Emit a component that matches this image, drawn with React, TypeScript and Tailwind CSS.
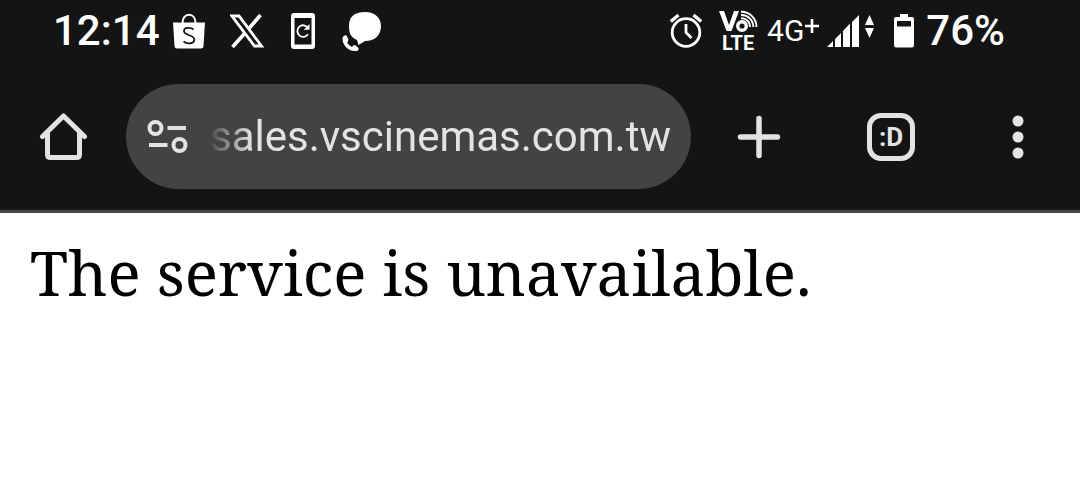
import React, { useState } from 'react';

const StatusBar: React.FC = () => {
    return (
        <div className="flex h-[62px] items-center justify-between pl-[53px] pr-[75px] font-[Roboto,sans-serif] font-medium text-white">
            <div className="flex items-center">
                <span className="text-[42px] leading-[60px]">12:14</span>
                <div className="ml-3 flex items-center gap-6">
                    <BagIcon />
                    <XIcon />
                    <PhoneRefreshIcon />
                    <CallBubbleIcon />
                </div>
            </div>

            <div className="flex items-center">
                <AlarmIcon />
                <VolteIcon />
                <span className="ml-2 text-[30px] font-normal leading-[60px]">4G</span>
                <PlusMark />
                <SignalIcon />
                <BatteryIcon />
                <span className="ml-3 text-[42px] leading-[60px]">76%</span>
            </div>
        </div>
    );
};

// Status icons
const BagIcon = () => (
    <svg width="34" height="38" viewBox="0 0 34 38" className="shrink-0">
        <path d="M1 10.500H33L31.500 34Q31.300 36.500 29 36.500H5Q2.700 36.500 2.500 34Z" fill="#fff" />
        <path d="M10.500 11C10.500 6 13 2.800 17 2.800S23.500 6 23.500 11" fill="none" stroke="#fff" strokeWidth="2" />
        <path
            d="M21.500 17.500C19.500 15.500 12 14.500 12 19C12 24 22.300 22.500 22.300 27.500C22.300 32.500 14.500 32 11.500 29.300"
            fill="none"
            stroke="#141414"
            strokeWidth="1.800"
        />
    </svg>
);

const XIcon = () => (
    <svg width="36" height="34" viewBox="1 0 36 34" className="shrink-0">
        <path d="M3 2H10L32.500 32H25.500Z" fill="none" stroke="#fff" strokeWidth="2.800" />
        <path d="M31.500 1L20 14.500M16 19L3.500 33" fill="none" stroke="#fff" strokeWidth="3.600" />
    </svg>
);

const PhoneRefreshIcon = () => (
    <svg width="26" height="38" viewBox="-1 0 26 38" className="shrink-0">
        <path
            fillRule="evenodd"
            d="M3 1H21Q24 1 24 4V34Q24 37 21 37H3Q0 37 0 34V4Q0 1 3 1ZM3.500 6V32.500H20.500V6Z"
            fill="#fff"
        />
        <path d="M17 15.800A5.800 5.800 0 1 0 17 22.300" fill="none" stroke="#fff" strokeWidth="1.800" />
        <path d="M18.500 12V17.800H12.800Z" fill="#fff" />
    </svg>
);

const CallBubbleIcon = () => (
    <svg width="42" height="42" viewBox="0 0 42 42" className="shrink-0">
        <path
            d="M25 2C35 2 41 8 41 16C41 25 35 31 25 31L18.500 35L17 30C10 27 9 22 9 16C9 7 14 2 25 2Z"
            fill="#fff"
        />
        <path
            d="M2.500 28Q3.500 24.500 6.500 25.500L8.500 29.500Q8 32 7 32.500Q8.500 35.500 12 37Q13.500 34.500 15 35L18.500 38Q19 40.500 16.500 41Q9 41.500 5 36Q2 32 2.500 28Z"
            fill="#fff"
        />
    </svg>
);

const AlarmIcon = () => (
    <svg width="34" height="36" viewBox="0 0 34 36" className="shrink-0">
        <circle cx="17" cy="19.500" r="13.800" fill="none" stroke="#fff" strokeWidth="2.800" />
        <path d="M1.800 8.500L9.500 2M32.200 8.500L24.500 2" stroke="#fff" strokeWidth="3.400" />
        <path d="M17 11V19.500L22.500 25" fill="none" stroke="#fff" strokeWidth="2.800" />
    </svg>
);

const VolteIcon = () => (
    <svg width="40" height="52" viewBox="0 -4 40 52" className="ml-4 shrink-0 font-[Roboto,sans-serif] font-bold">
        <path d="M0 2H5L10 16L15 2H20L12.500 22H7.500Z" fill="#fff" />
        <circle cx="23" cy="17" r="4.300" fill="none" stroke="#fff" strokeWidth="3.400" />
        <path
            d="M22 9.200A8.500 8.500 0 0 1 31 18M22 6A11.800 11.800 0 0 1 34.300 18M22 2.800A15.200 15.200 0 0 1 37.500 18"
            fill="none"
            stroke="#fff"
            strokeWidth="1.900"
        />
        <text x="3" y="41" fontSize="20" fill="#fff">LTE</text>
    </svg>
);

const PlusMark = () => (
    <svg width="16" height="36" viewBox="0 0 16 36" className="shrink-0">
        <path d="M1 13H15M8 6V20" stroke="#fff" strokeWidth="2.600" />
    </svg>
);

const SignalIcon = () => (
    <svg width="50" height="34" viewBox="0 0 50 34" className="ml-1.5 shrink-0">
        <path
            d="M1 33L7 27V33ZM9 33V25L15 19V33ZM17 33V17L24 9.500V33ZM26 33V8L33 1V33Z"
            fill="#fff"
        />
        <path d="M43.500 1L48 11H39ZM39 14H48L43.500 24Z" fill="#fff" />
    </svg>
);

const BatteryIcon = () => (
    <svg width="20" height="34" viewBox="0 0 20 34" className="ml-[18px] shrink-0">
        <path
            fillRule="evenodd"
            d="M6 0H14V3H18Q20 3 20 5V31.500Q20 33.500 18 33.500H2Q0 33.500 0 31.500V5Q0 3 2 3H6ZM3 7V12.500H17V7Z"
            fill="#fff"
        />
    </svg>
);

// Browser toolbar
const Toolbar: React.FC = () => {
    const [url, setUrl] = useState('sales.vscinemas.com.tw');

    return (
        <div className="flex items-center pt-[22px] pb-[21px] text-[#e3e3e3]">
            <button type="button" aria-label="Home" className="flex h-[105px] w-[126px] items-center justify-center">
                <svg width="50" height="50" viewBox="0 0 50 50">
                    <path
                        d="M4.500 24.500L25.500 4L46.500 24.500M9.500 20V42.500Q9.500 45.500 12.500 45.500H38.500Q41.500 45.500 41.500 42.500V20"
                        fill="none"
                        stroke="currentColor"
                        strokeWidth="5"
                        strokeLinecap="round"
                        strokeLinejoin="round"
                    />
                </svg>
            </button>

            <div className="flex h-[105px] min-w-0 flex-1 items-center rounded-full bg-[#434343] pl-5 pr-5">
                <button type="button" aria-label="Site information" className="shrink-0">
                    <svg width="42" height="36" viewBox="0 0 42 36">
                        <g fill="none" stroke="currentColor" strokeWidth="4">
                            <circle cx="9.500" cy="9" r="6" />
                            <circle cx="33.500" cy="26" r="6" />
                            <path d="M21.500 9H40M3 26H21.500" />
                        </g>
                    </svg>
                </button>
                <input
                    type="text"
                    aria-label="Address"
                    value={url}
                    onChange={(e) => setUrl(e.target.value)}
                    className="ml-5 min-w-0 flex-1 bg-transparent text-right font-[Roboto,sans-serif] text-[42px] leading-[60px] outline-none mask-l-from-[420px] mask-l-to-[463px]"
                />
            </div>

            <button type="button" aria-label="New tab" className="flex h-[105px] w-[136px] items-center justify-center">
                <svg width="44" height="44" viewBox="0 0 44 44">
                    <path d="M3.500 22H40.500M22 3.500V40.500" stroke="currentColor" strokeWidth="5.500" strokeLinecap="round" />
                </svg>
            </button>
            <button type="button" aria-label="Tabs" className="flex h-[105px] w-32 items-center justify-center">
                <span className="flex size-12 items-center justify-center rounded-[14px] border-5 border-current font-[Roboto,sans-serif] text-[26px] font-bold leading-8">
                    :D
                </span>
            </button>
            <button type="button" aria-label="More options" className="flex h-[105px] w-[125px] items-center justify-center">
                <svg width="12" height="44" viewBox="0 0 12 44" fill="currentColor">
                    <circle cx="6" cy="6" r="5.500" />
                    <circle cx="6" cy="22" r="5.500" />
                    <circle cx="6" cy="38" r="5.500" />
                </svg>
            </button>
        </div>
    );
};

const App: React.FC = () => {
    return (
        <div className="min-h-screen bg-white">
            <header className="border-b-3 border-[#474747] bg-[#141414]">
                <StatusBar />
                <Toolbar />
            </header>

            <main className="px-[30px] pt-[17px]">
                <p className="font-['Noto_Serif','Droid_Serif','DejaVu_Serif',serif] text-[62px] leading-[84px] text-black">
                    The service is unavailable.
                </p>
            </main>
        </div>
    );
};

export default App;
